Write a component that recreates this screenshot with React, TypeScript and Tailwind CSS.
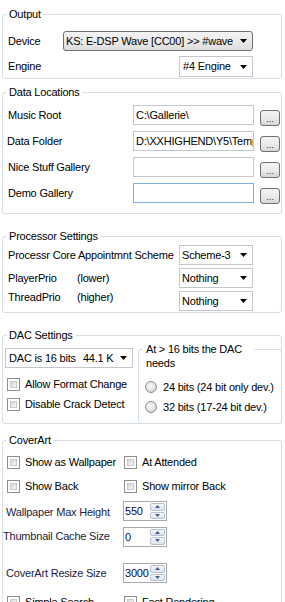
import React from "react";

const Arrow = ({ color = "#000" }: { color?: string }) => (
  <svg width="7" height="4" viewBox="0 0 7 4">
    <path d="M0 0h7L3.5 4z" fill={color} />
  </svg>
);

const Combo = ({
  w,
  text,
  dark,
  h = 20,
}: {
  w: string;
  text: React.ReactNode;
  dark?: boolean;
  h?: number;
}) => (
  <div
    className={
      w +
      " flex items-center shrink-0 " +
      (dark
        ? "h-[20px] border border-[#707070] rounded-[3px] bg-gradient-to-b from-[#f3f3f3] via-[#ebebeb] to-[#dddddd]"
        : "border border-[#c3c7cc] bg-white")
    }
    style={{ height: h }}
  >
    <span className="flex-1 overflow-hidden whitespace-nowrap pl-[2px]">{text}</span>
    <span className="w-[17px] flex justify-center shrink-0">
      <Arrow />
    </span>
  </div>
);

const Check = () => (
  <span className="w-[13px] h-[13px] border border-[#8f8f8f] bg-white p-[2px] flex shrink-0">
    <span className="flex-1 border border-[#c9c9c9] bg-gradient-to-br from-[#d8d8d8] to-[#f7f7f7]" />
  </span>
);

const Radio = () => (
  <span className="w-[12px] h-[12px] rounded-full border border-[#8f8f8f] bg-[radial-gradient(circle_at_45%_40%,#fbfbfb_0%,#e2e2e2_55%,#c4c4c4_100%)] shrink-0" />
);

const Dots = () => (
  <div className="w-[20px] h-[16px] border border-[#707070] rounded-[3px] bg-gradient-to-b from-[#f3f3f3] via-[#ebebeb] to-[#d6d6d6] flex items-end justify-center shrink-0">
    <span className="text-[9px] leading-[11px] text-[#1e2c5a] tracking-[0px]">...</span>
  </div>
);

const TextBox = ({ value, focus }: { value?: string; focus?: boolean }) => (
  <div
    className={
      "w-[121px] h-[20px] bg-white border flex items-center pl-[2px] overflow-hidden whitespace-nowrap shrink-0 " +
      (focus ? "border-[#84b0dc]" : "border-[#c3c7cc]")
    }
  >
    {value}
  </div>
);

const SpinArrow = ({ up }: { up?: boolean }) => (
  <svg width="5" height="3" viewBox="0 0 5 3">
    <path d={up ? "M0 3h5L2.5 0z" : "M0 0h5L2.5 3z"} fill="#4b5d85" />
  </svg>
);

const Spinner = ({ value }: { value: string }) => (
  <div className="w-[44px] h-[20px] border border-[#a9a9a9] bg-white flex shrink-0">
    <span className="flex-1 pl-[1px] leading-[18px] text-[#0b0b40]">{value}</span>
    <div className="w-[16px] flex flex-col py-[1px] pr-[1px] gap-[1px]">
      <span className="flex-1 border border-[#b7c2d0] rounded-[2px] bg-gradient-to-b from-[#f4f7fb] to-[#d9e2ee] flex items-center justify-center">
        <SpinArrow up />
      </span>
      <span className="flex-1 border border-[#b7c2d0] rounded-[2px] bg-gradient-to-b from-[#f4f7fb] to-[#d9e2ee] flex items-center justify-center">
        <SpinArrow />
      </span>
    </div>
  </div>
);

const Group = ({
  title,
  className = "",
  children,
}: {
  title: string;
  className?: string;
  children: React.ReactNode;
}) => (
  <fieldset
    className={"ml-[2px] w-[280px] border border-[#d5dfe5] rounded-[3px] p-0 min-w-0 " + className}
  >
    <legend className="ml-[4px] px-[2px] leading-[13px]">{title}</legend>
    {children}
  </fieldset>
);

export default function App() {
  return (
    <div className="w-[285px] h-[602px] overflow-hidden bg-white text-black font-['Liberation_Sans',Arial,sans-serif] text-[11px] tracking-[-0.2px] leading-[13px]">
      {/* Output */}
      <Group title="Output" className="mt-[8px]">
        <div className="pl-[5px] pr-[28px] pt-[10px] pb-[1px] flex flex-col gap-[5px]">
          <div className="h-[20px] flex items-center justify-between">
            <span>Device</span>
            <Combo w="w-[190px]" dark text="KS: E-DSP Wave [CC00] >> #wave" />
          </div>
          <div className="h-[21px] flex items-center justify-between">
            <span>Engine</span>
            <Combo w="w-[74px]" h={21} text={<span className="pl-[1px]">#4 Engine</span>} />
          </div>
        </div>
      </Group>

      {/* Data Locations */}
      <Group title="Data Locations" className="mt-[7px]">
        <div className="pl-[5px] pr-[1px] pt-[6px] pb-[10px] flex flex-col gap-[6px]">
          {[
            { l: "Music Root", v: "C:\\Gallerie\\" },
            { l: "Data Folder", v: "D:\\XXHIGHEND\\Y5\\Temp", pl: "-ml-[1px]" },
            { l: "Nice Stuff Gallery", v: "" },
            { l: "Demo Gallery", v: "", f: true },
          ].map((r) => (
            <div key={r.l} className="h-[20px] flex items-end">
              <span className={"flex-1 self-center " + (r.pl || "")}>{r.l}</span>
              <TextBox value={r.v} focus={r.f} />
              <div className="ml-[6px] mb-[-1px]">
                <Dots />
              </div>
            </div>
          ))}
        </div>
      </Group>

      {/* Processor Settings */}
      <Group title="Processor Settings" className="mt-[16px]">
        <div className="pl-[5px] pr-[28px] pt-[2px] pb-[1px] flex flex-col gap-[3px]">
          <div className="h-[20px] flex items-center justify-between">
            <span>Processr Core Appointmnt Scheme</span>
            <Combo w="w-[74px]" text="Scheme-3" />
          </div>
          <div className="h-[20px] flex items-center">
            <span className="w-[69px]">PlayerPrio</span>
            <span className="flex-1">(lower)</span>
            <Combo w="w-[74px]" text="Nothing" />
          </div>
          <div className="h-[20px] flex items-center">
            <span className="w-[69px] -mt-[7px]">ThreadPrio</span>
            <span className="flex-1 -mt-[7px]">(higher)</span>
            <Combo w="w-[74px]" text="Nothing" />
          </div>
        </div>
      </Group>

      {/* DAC Settings */}
      <Group title="DAC Settings" className="mt-[16px]">
        <div className="pt-[1px] flex">
          <div className="pl-[2px] w-[135px] flex flex-col">
            <div className="mt-[5px]">
              <Combo
                w="w-[128px]"
                text={
                  <span className="pl-[1px]">
                    DAC is 16 bits<span className="ml-[7px]">44.1 K</span>
                  </span>
                }
              />
            </div>
            <div className="mt-[6px] h-[20px] flex items-center pl-[2px] gap-[5px]">
              <Check />
              <span>Allow Format Change</span>
            </div>
            <div className="h-[20px] flex items-center pl-[2px] gap-[5px]">
              <Check />
              <span>Disable Crack Detect</span>
            </div>
          </div>
          <fieldset className="flex-1 border border-[#d5dfe5] rounded-[3px] p-0 min-w-0 -mr-[1px] -mb-[1px]">
            <legend className="ml-[3px] px-[4px] w-[112px] leading-[13px] whitespace-nowrap">
              At &gt; 16 bits the DAC
            </legend>
            <div className="pl-[6px]">
              <div className="h-[14px] leading-[14px] pl-[1px]">needs</div>
              <div className="mt-[7px] h-[20px] flex items-center gap-[6px]">
                <Radio />
                <span>24 bits (24 bit only dev.)</span>
              </div>
              <div className="h-[20px] flex items-center gap-[6px]">
                <Radio />
                <span>32 bits (17-24 bit dev.)</span>
              </div>
              <div className="h-[6px]" />
            </div>
          </fieldset>
        </div>
      </Group>

      {/* CoverArt */}
      <Group title="CoverArt" className="mt-[10px] h-[220px] rounded-b-none">
        <div className="pt-[5px] flex flex-col">
          <div className="h-[20px] flex items-center">
            <div className="w-[121px] pl-[4px] flex items-center gap-[5px]">
              <Check />
              <span>Show as Wallpaper</span>
            </div>
            <div className="flex items-center gap-[5px]">
              <Check />
              <span>At Attended</span>
            </div>
          </div>
          <div className="mt-[4px] h-[20px] flex items-center">
            <div className="w-[121px] pl-[4px] flex items-center gap-[5px]">
              <Check />
              <span>Show Back</span>
            </div>
            <div className="flex items-center gap-[5px]">
              <Check />
              <span>Show mirror Back</span>
            </div>
          </div>
          <div className="mt-[5px] h-[20px] flex items-center">
            <span className="w-[120px] pl-[3px] pt-[3px] text-[#1c1c3c]">Wallpaper Max Height</span>
            <Spinner value="550" />
          </div>
          <div className="mt-[5px] h-[21px] flex items-center">
            <span className="w-[120px] pl-[0px] text-[#1c1c3c]">Thumbnail Cache Size</span>
            <Spinner value="0" />
          </div>
          <div className="mt-[16px] h-[20px] flex items-center">
            <span className="w-[120px] pl-[3px] text-[#1c1c3c]">CoverArt Resize Size</span>
            <Spinner value="3000" />
          </div>
          <div className="mt-[9px] h-[20px] flex items-center">
            <div className="w-[121px] pl-[4px] flex items-center gap-[5px]">
              <Check />
              <span>Simple Search</span>
            </div>
            <div className="flex items-center gap-[5px]">
              <Check />
              <span>Fast Rendering</span>
            </div>
          </div>
        </div>
      </Group>
    </div>
  );
}
